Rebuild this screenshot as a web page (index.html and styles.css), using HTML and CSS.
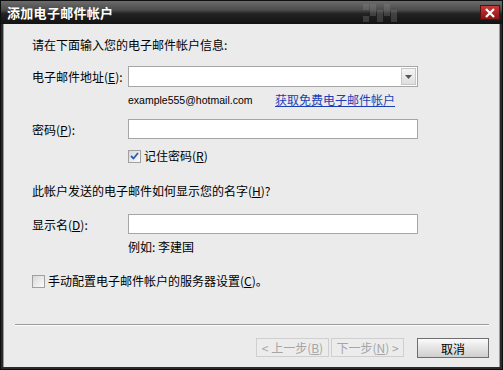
FILE: index.html
```html
<!DOCTYPE html>
<html>
<head>
    <title>添加电子邮件帐户</title>
    <link rel="stylesheet" href="styles.css">
</head>
<body>
    <div class="window">
        <!-- Title bar -->
        <div class="titlebar">
            <span class="title">添加电子邮件帐户</span>
            <div class="grip">
                <i style="left:0px;top:2px"></i><i style="left:7px;top:2px"></i><i style="left:21px;top:2px"></i>
                <i style="left:7px;top:8px"></i><i style="left:14px;top:8px"></i><i style="left:21px;top:8px"></i><i style="left:28px;top:8px"></i>
                <i style="left:0px;top:14px"></i><i style="left:14px;top:14px"></i><i style="left:28px;top:14px"></i>
            </div>
            <div class="close">
                <svg width="14" height="10" viewBox="0 0 14 10">
                    <path d="M3,1 L11,9 M11,1 L3,9" stroke="#fff" stroke-width="2.2"/>
                </svg>
            </div>
        </div>

        <!-- Content -->
        <div class="content">
            <div class="line intro">请在下面输入您的电子邮件帐户信息:</div>

            <div class="row row-email">
                <label class="label">电子邮件地址(<u>E</u>):</label>
                <div class="combo">
                    <div class="field"></div>
                    <div class="drop">
                        <svg width="7" height="4" viewBox="0 0 7 4"><path d="M0,0 L7,0 L3.5,4 Z" fill="#555"/></svg>
                    </div>
                </div>
            </div>

            <div class="line hint">
                <span class="latin">example555@hotmail.com</span>
                <a class="link" href="#">获取免费电子邮件帐户</a>
            </div>

            <div class="row row-pass">
                <label class="label">密码(<u>P</u>):</label>
                <div class="input"></div>
            </div>

            <div class="line check-line remember">
                <span class="box checked">
                    <svg width="9" height="8" viewBox="0 0 9 8"><path d="M1,4 L3.5,6.5 L8,1" stroke="#2a5bb5" stroke-width="1.8" fill="none"/></svg>
                </span>
                <span>记住密码(<u>R</u>)</span>
            </div>

            <div class="line question">此帐户发送的电子邮件如何显示您的名字(<u>H</u>)?</div>

            <div class="row row-name">
                <label class="label">显示名(<u>D</u>):</label>
                <div class="input"></div>
            </div>

            <div class="line example">例如: 李建国</div>

            <div class="line check-line manual">
                <span class="box"></span>
                <span>手动配置电子邮件帐户的服务器设置(<u>C</u>)。</span>
            </div>

            <div class="footer">
                <div class="separator"></div>
                <div class="buttons">
                    <button class="btn disabled">&lt; 上一步(<u>B</u>)</button>
                    <button class="btn disabled">下一步(<u>N</u>) &gt;</button>
                    <button class="btn cancel">取消</button>
                </div>
            </div>
        </div>
    </div>
</body>
</html>
```

FILE: styles.css
```css
body {
    margin: 0;
    background: #1b1b1b;
    font-family: "Noto Sans CJK SC", "Liberation Sans", sans-serif;
    font-size: 12px;
    color: #000;
}
.window {
    width: 503px;
    height: 370px;
    box-sizing: border-box;
    background: #2a2a2a;
    border: 1px solid #0e0e0e;
    display: flex;
    flex-direction: column;
}
.titlebar {
    position: relative;
    height: 23px;
    display: flex;
    align-items: center;
    padding-left: 6px;
    background: linear-gradient(#6c6c6c 0, #4a4a4a 40%, #232323 55%, #121212 100%);
}
.title {
    color: #fff;
    font-weight: bold;
    font-size: 13px;
    letter-spacing: 0.3px;
}
.grip {
    position: absolute;
    left: 362px;
    top: 1px;
    width: 34px;
    height: 21px;
}
.grip i {
    position: absolute;
    width: 6px;
    height: 6px;
    background: rgba(140, 140, 140, 0.3);
}
.close {
    position: absolute;
    right: 2px;
    top: 4px;
    width: 20px;
    height: 15px;
    box-sizing: border-box;
    border: 1px solid #5a0d0d;
    background: linear-gradient(#c83a3a, #8e1414);
    display: flex;
    align-items: center;
    justify-content: center;
}
.content {
    flex: 1;
    margin: 0 2px 2px 2px;
    background: #ebebeb;
    border-left: 1px solid #9a9a9a;
    border-right: 1px solid #9a9a9a;
    padding-left: 28px;
    display: flex;
    flex-direction: column;
}
.line {
    height: 16px;
    line-height: 16px;
    white-space: nowrap;
}
u {
    text-decoration: underline;
    text-underline-offset: 1px;
}
.intro { margin-top: 13px; }
.row {
    display: flex;
    align-items: center;
}
.label {
    width: 96px;
    flex: none;
}
.row-email { margin-top: 13px; height: 21px; }
.combo {
    display: flex;
    width: 290px;
    height: 21px;
    box-sizing: border-box;
    border: 1px solid #a6a6a6;
    background: #fff;
}
.field { flex: 1; }
.drop {
    width: 15px;
    margin: 1px;
    box-sizing: border-box;
    border: 1px solid #c8c8c8;
    background: linear-gradient(#f4f4f4, #dedede);
    display: flex;
    align-items: center;
    justify-content: center;
}
.input {
    width: 290px;
    height: 20px;
    box-sizing: border-box;
    border: 1px solid #a6a6a6;
    background: #fff;
}
.hint {
    margin-top: 5px;
    padding-left: 96px;
    display: flex;
}
.latin {
    font-family: "Liberation Sans", sans-serif;
    font-size: 10.5px;
    width: 147px;
}
.link {
    color: #1c3fb8;
    text-decoration: underline;
}
.row-pass { margin-top: 11px; height: 20px; }
.check-line {
    display: flex;
    align-items: center;
    gap: 3px;
}
.remember { margin-top: 9px; padding-left: 96px; }
.box {
    width: 13px;
    height: 13px;
    box-sizing: border-box;
    border: 1px solid #a0a0a0;
    background: linear-gradient(135deg, #d8d8d8, #fbfbfb);
    display: flex;
    align-items: center;
    justify-content: center;
}
.question { margin-top: 19px; }
.row-name { margin-top: 15px; height: 20px; }
.example { margin-top: 5px; padding-left: 96px; }
.manual { margin-top: 18px; }
.footer {
    margin-top: auto;
    margin-left: -17px;
    margin-right: 10px;
    padding-bottom: 9px;
}
.separator {
    height: 1px;
    background: #9c9c9c;
    border-bottom: 1px solid #fbfbfb;
    margin-bottom: 12px;
}
.buttons {
    display: flex;
    justify-content: flex-end;
}
.btn {
    height: 19px;
    width: 73px;
    box-sizing: border-box;
    padding: 0;
    font-family: "Noto Sans CJK SC", sans-serif;
    font-size: 12px;
    line-height: 15px;
}
.disabled {
    color: #a5a5a5;
    background: #ececec;
    border: 1px solid #cfcfcf;
    margin-left: 2px;
}
.cancel {
    margin-left: 13px;
    width: 72px;
    height: 20px;
    color: #000;
    border: 1px solid #6e6e6e;
    background: linear-gradient(#fbfbfb, #e4e4e4 50%, #cfcfcf);
}
```
